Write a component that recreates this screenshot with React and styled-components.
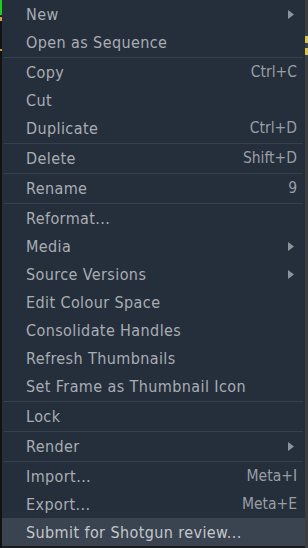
import React from "react";
import styled, { createGlobalStyle } from "styled-components";

const Global = createGlobalStyle`
  html, body { margin: 0; padding: 0; background: #1b1c1e; }
  body { width: 308px; height: 548px; overflow: hidden; }
`;

const Page = styled.div`
  display: flex;
  width: 308px;
  height: 548px;
  background: #1b1c1e;
`;

const Strip = styled.div`
  width: ${(p) => p.$w}px;
  flex: none;
  display: flex;
  flex-direction: column;
  background: ${(p) => p.$bg};
`;

const Mark = styled.div`
  height: ${(p) => p.$h}px;
  margin-top: ${(p) => p.$mt || 0}px;
  background: ${(p) => p.$c};
  flex: none;
`;

const Menu = styled.div`
  width: 303px;
  height: 545px;
  flex: none;
  background: #252f3c;
  display: flex;
  flex-direction: column;
  font-family: "DejaVu Sans Condensed", "DejaVu Sans", sans-serif;
  font-size: 16px;
  color: #a9adb2;
`;

const Item = styled.div`
  height: 28px;
  flex: none;
  display: flex;
  align-items: center;
  padding: 0 8px 0 24px;
  background: ${(p) => (p.$active ? "#3a4350" : "transparent")};
  color: ${(p) => (p.$active ? "#c4c7cb" : "#a9adb2")};
`;

const Label = styled.span`
  flex: 1;
  white-space: nowrap;
  letter-spacing: 0.4px;
`;

const Shortcut = styled.span`
  white-space: nowrap;
  font-size: 15.5px;
  color: #9a9ea4;
`;

const Sep = styled.div`
  height: 2px;
  flex: none;
  display: flex;
  flex-direction: column;
  justify-content: center;
  &::after {
    content: "";
    height: 1px;
    background: #35414e;
    margin: 0 2px;
  }
`;

const ArrowIcon = styled.svg`
  margin-right: 3px;
  flex: none;
`;

const Arrow = () => (
  <ArrowIcon width="6" height="9" viewBox="0 0 6 9">
    <path d="M0 0 L6 4.5 L0 9 Z" fill="#8d939b" />
  </ArrowIcon>
);

const items = [
  { l: "New", sub: true },
  { l: "Open as Sequence" },
  "sep",
  { l: "Copy", s: "Ctrl+C" },
  { l: "Cut" },
  { l: "Duplicate", s: "Ctrl+D" },
  "sep",
  { l: "Delete", s: "Shift+D" },
  "sep",
  { l: "Rename", s: "9" },
  "sep",
  { l: "Reformat..." },
  { l: "Media", sub: true },
  { l: "Source Versions", sub: true },
  { l: "Edit Colour Space" },
  { l: "Consolidate Handles" },
  { l: "Refresh Thumbnails" },
  { l: "Set Frame as Thumbnail Icon" },
  "sep",
  { l: "Lock" },
  "sep",
  { l: "Render", sub: true },
  "sep",
  { l: "Import...", s: "Meta+I" },
  { l: "Export...", s: "Meta+E" },
  { l: "Submit for Shotgun review...", active: true },
];

export default function App() {
  return (
    <Page>
      <Global />
      <Strip $w={2} $bg="#111214">
        <Mark $h={15} $c="#16d21a" />
        <Mark $h={4} $mt={2} $c="#e0a020" />
        <Mark $h={2} $mt={28} $c="#d8961c" />
      </Strip>
      <Menu>
        {items.map((it, i) =>
          it === "sep" ? (
            <Sep key={i} />
          ) : (
            <Item key={i} $active={it.active}>
              <Label>{it.l}</Label>
              {it.s && <Shortcut>{it.s}</Shortcut>}
              {it.sub && <Arrow />}
            </Item>
          )
        )}
      </Menu>
      <Strip $w={3} $bg="#3b3e43">
        <Mark $h={7} $mt={36} $c="#d9c34a" />
        <Mark $h={7} $mt={5} $c="#d9c34a" />
      </Strip>
    </Page>
  );
}
